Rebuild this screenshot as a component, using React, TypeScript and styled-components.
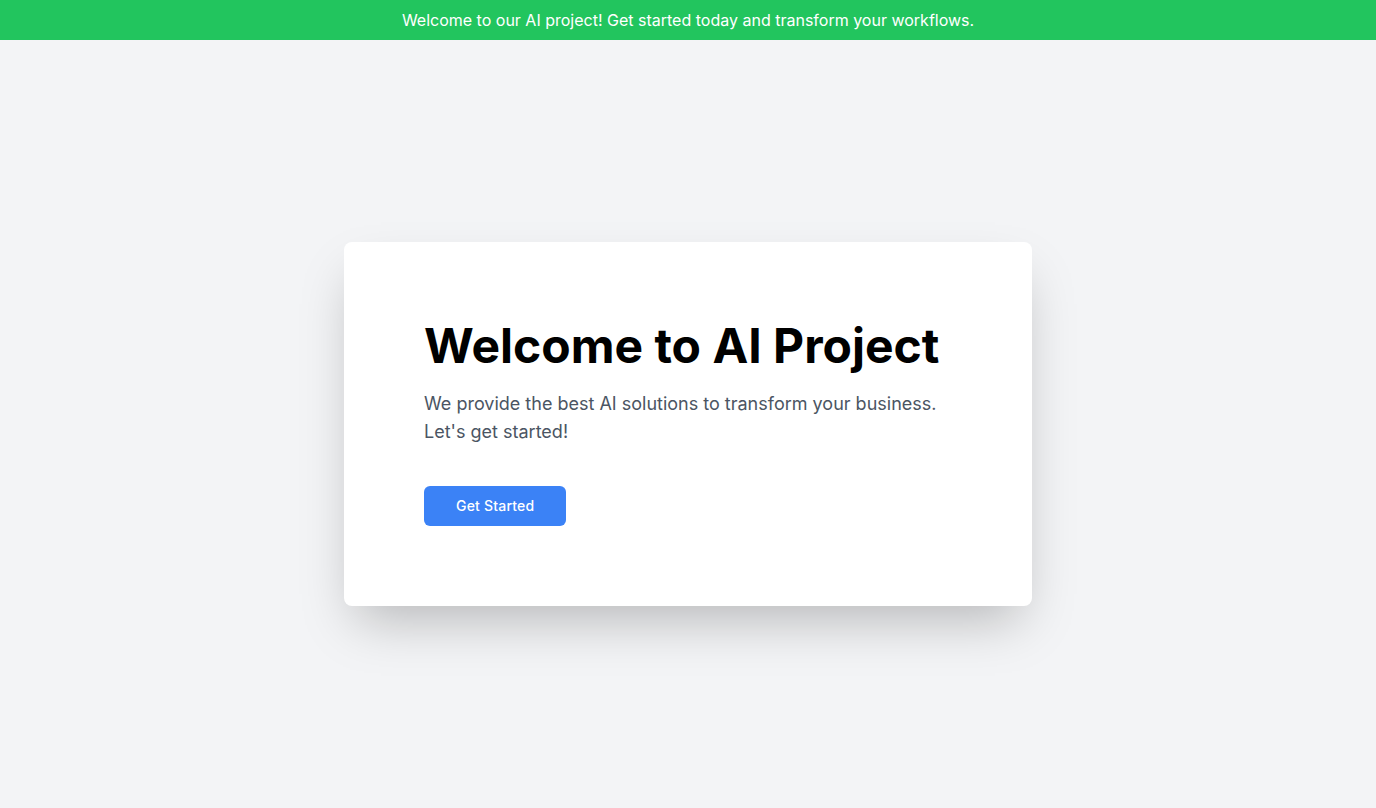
import React from "react";
import styled, { createGlobalStyle } from "styled-components";

const Global = createGlobalStyle`
  html, body { margin: 0; padding: 0; }
  body {
    background: #f3f4f6;
    font-family: Inter, "Noto Sans", Arial, sans-serif;
    -webkit-font-smoothing: antialiased;
  }
  * { box-sizing: border-box; }
`;

const Page = styled.div`
  min-height: 808px;
  display: flex;
  flex-direction: column;
`;

const Banner = styled.div`
  height: 40px;
  background: #22c55e;
  color: #ffffff;
  font-size: 16px;
  display: flex;
  align-items: center;
  justify-content: center;
`;

const Main = styled.main`
  flex: 1;
  display: flex;
  align-items: center;
  justify-content: center;
`;

const Card = styled.section`
  width: 688px;
  background: #ffffff;
  border-radius: 8px;
  padding: 80px;
  box-shadow: 0 25px 50px -12px rgba(0, 0, 0, 0.25);
`;

const Title = styled.h1`
  margin: 0 0 20px;
  font-size: 48px;
  line-height: 48px;
  font-weight: 700;
  color: #000000;
`;

const Lead = styled.p`
  margin: 0 0 40px;
  font-size: 18px;
  line-height: 28px;
  color: #4b5563;
`;

const Button = styled.button`
  height: 40px;
  padding: 0 32px 1px;
  border: none;
  border-radius: 6px;
  background: #3b82f6;
  color: #ffffff;
  font-family: inherit;
  font-size: 14px;
  font-weight: 500;
  letter-spacing: 0.2px;
  cursor: pointer;
`;

export default function App() {
  return (
    <Page>
      <Global />
      <Banner>Welcome to our AI project! Get started today and transform your workflows.</Banner>
      <Main>
        <Card>
          <Title>Welcome to AI Project</Title>
          <Lead>
            We provide the best AI solutions to transform your business.
            <br />
            Let's get started!
          </Lead>
          <Button>Get Started</Button>
        </Card>
      </Main>
    </Page>
  );
}
